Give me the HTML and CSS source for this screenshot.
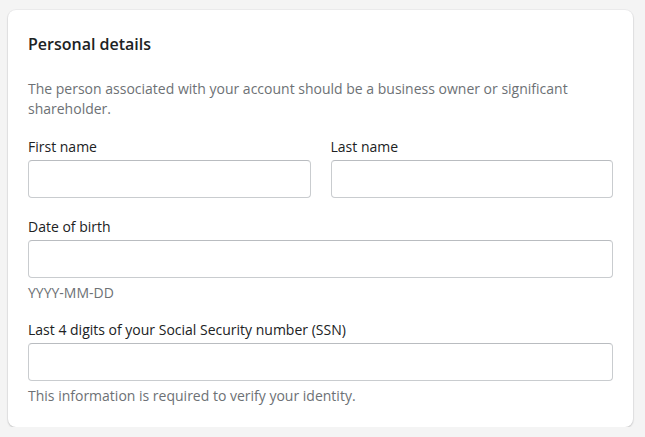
FILE: index.html
```html
<!DOCTYPE html>
<html lang="en">
<head>
<meta charset="utf-8">
<title>Personal details</title>
<link rel="stylesheet" href="styles.css">
</head>
<body>
<section class="card">
  <h2 class="card-title">Personal details</h2>
  <p class="card-desc">The person associated with your account should be a business owner or significant shareholder.</p>
  <div class="row">
    <div class="field">
      <label class="label" for="fn">First name</label>
      <input class="input" id="fn" type="text">
    </div>
    <div class="field">
      <label class="label" for="ln">Last name</label>
      <input class="input" id="ln" type="text">
    </div>
  </div>
  <div class="field">
    <label class="label" for="dob">Date of birth</label>
    <input class="input" id="dob" type="text">
    <p class="help">YYYY-MM-DD</p>
  </div>
  <div class="field">
    <label class="label" for="ssn">Last 4 digits of your Social Security number (SSN)</label>
    <input class="input" id="ssn" type="text">
    <p class="help">This information is required to verify your identity.</p>
  </div>
</section>
</body>
</html>
```
FILE: styles.css
```css
html, body {
  margin: 0;
  background: #f4f4f4;
}
body {
  padding: 10px 12px 0 8px;
  font-family: "Open Sans", "Noto Sans", sans-serif;
  color: #202223;
  font-size: 14px;
  line-height: 20px;
}
.card {
  width: 625px;
  box-sizing: border-box;
  background: #fff;
  border-radius: 8px;
  box-shadow: 0 1px 2px rgba(0,0,0,0.18), 0 0 0 1px rgba(63,63,68,0.04);
  padding: 22px 20px 21px 20px;
}
.card-title {
  margin: 0;
  font-size: 16px;
  font-weight: 600;
  line-height: 24px;
}
.card-desc {
  margin: 23px 0 0;
  color: #6d7175;
}
.row {
  display: grid;
  grid-template-columns: 1fr 1fr;
  gap: 20px;
  margin-top: 18px;
}
.field {
  display: flex;
  flex-direction: column;
}
.field + .field {
  margin-top: 17px;
}
.row + .field {
  margin-top: 19px;
}
.row .field + .field { margin-top: 0; }
.label {
  margin-bottom: 3px;
}
.input {
  height: 38px;
  box-sizing: border-box;
  border: 1px solid #c9cccf;
  border-top-color: #b9bcc0;
  border-radius: 4px;
  background: #fff;
  font: inherit;
  padding: 0 12px;
  margin: 0;
  width: 100%;
}
.help {
  margin: 5px 0 0;
  color: #6d7175;
}
.field + .field .help {
  margin-top: 5px;
}
```
